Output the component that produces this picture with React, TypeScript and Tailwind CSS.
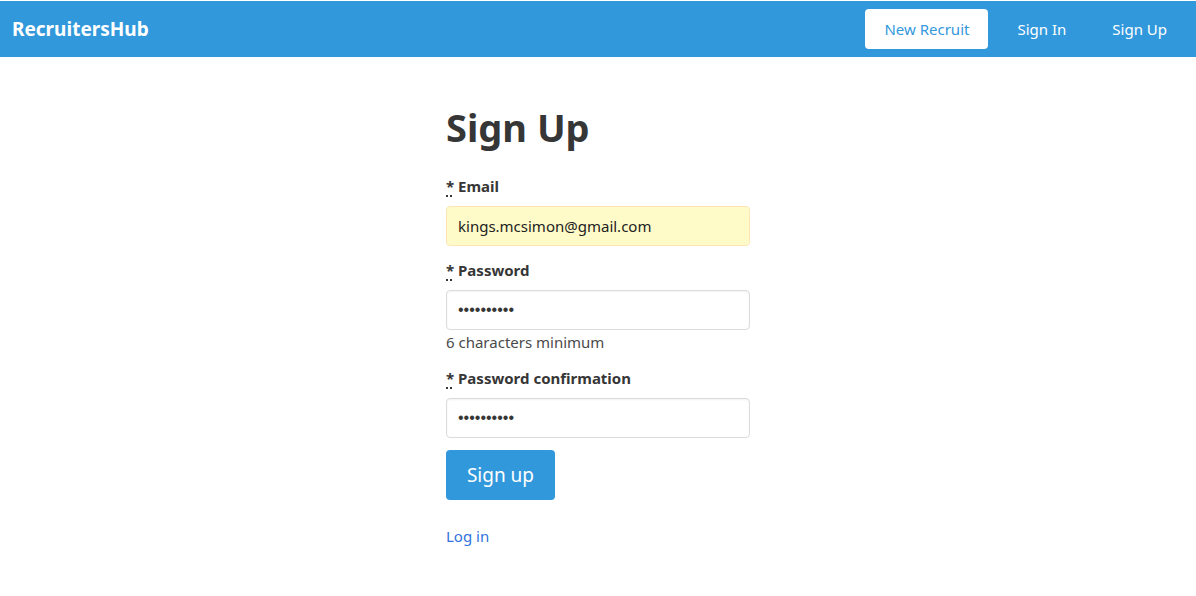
import { useState } from 'react';
import type { ReactNode } from 'react';

function NavButton({ href, solid, children }: { href: string; solid?: boolean; children: ReactNode }) {
  return (
    <a
      href={href}
      className={`flex h-10 items-center justify-center whitespace-nowrap rounded px-[17px] text-[15px] leading-6 ${
        solid ? 'min-w-[123px] bg-white text-[#3298dc]' : 'min-w-[82px] text-white'
      }`}
    >
      {children}
    </a>
  );
}

interface FieldProps {
  id: string;
  label: string;
  type: string;
  initial: string;
  hint?: string;
  autofilled?: boolean;
}

function Field({ id, label, type, initial, hint, autofilled }: FieldProps) {
  const [value, setValue] = useState(initial);
  return (
    <div>
      <label htmlFor={id} className="mb-2 block text-[15px] leading-6 font-bold text-[#363636]">
        <abbr title="required" className="underline decoration-dotted decoration-2 underline-offset-3">
          *
        </abbr>{' '}
        {label}
      </label>
      <input
        id={id}
        type={type}
        value={value}
        onChange={(event) => setValue(event.target.value)}
        className={`block h-10 w-full rounded border px-[11px] outline-none ${
          autofilled
            ? 'border-[#ffe5b4] bg-[#fffbc8] text-[15px] text-[#222]'
            : "border-[#dbdbdb] bg-white font-['Liberation_Sans',sans-serif] text-base text-[#363636] shadow-[inset_0_1px_2px_rgba(10,10,10,0.05)]"
        }`}
      />
      {hint && <p className="text-[15px] leading-6 text-[#4a4a4a]">{hint}</p>}
    </div>
  );
}

export default function App() {
  return (
    <div className="min-h-screen bg-white pt-px font-['Noto_Sans',sans-serif] text-[#4a4a4a]">
      <nav className="flex h-14 items-center justify-between bg-[#3298dc] px-3">
        <a href="#home" className="text-[19px] leading-7 font-bold text-white">
          RecruitersHub
        </a>
        <div className="flex gap-3">
          <NavButton href="#new" solid>
            New Recruit
          </NavButton>
          <NavButton href="#signin">Sign In</NavButton>
          <NavButton href="#signup">Sign Up</NavButton>
        </div>
      </nav>
      <main className="mx-auto flex max-w-[984px] justify-center py-12">
        <div className="w-full px-3 sm:w-1/3">
          <h1 className="mb-6 text-[38px] leading-[45px] font-bold text-[#363636]">Sign Up</h1>
          <form className="flex flex-col gap-3" onSubmit={(event) => event.preventDefault()}>
            <Field id="email" label="Email" type="email" initial="kings.mcsimon@gmail.com" autofilled />
            <Field id="password" label="Password" type="password" initial="abcdefghij" hint="6 characters minimum" />
            <Field id="confirmation" label="Password confirmation" type="password" initial="abcdefghij" />
            <button type="submit" className="h-[50px] min-w-[109px] self-start rounded bg-[#3298dc] px-4 text-[19px] leading-7 text-white">
              Sign up
            </button>
          </form>
          <a href="#login" className="mt-6 inline-block text-[15px] leading-6 text-[#3273dc]">
            Log in
          </a>
        </div>
      </main>
    </div>
  );
}
